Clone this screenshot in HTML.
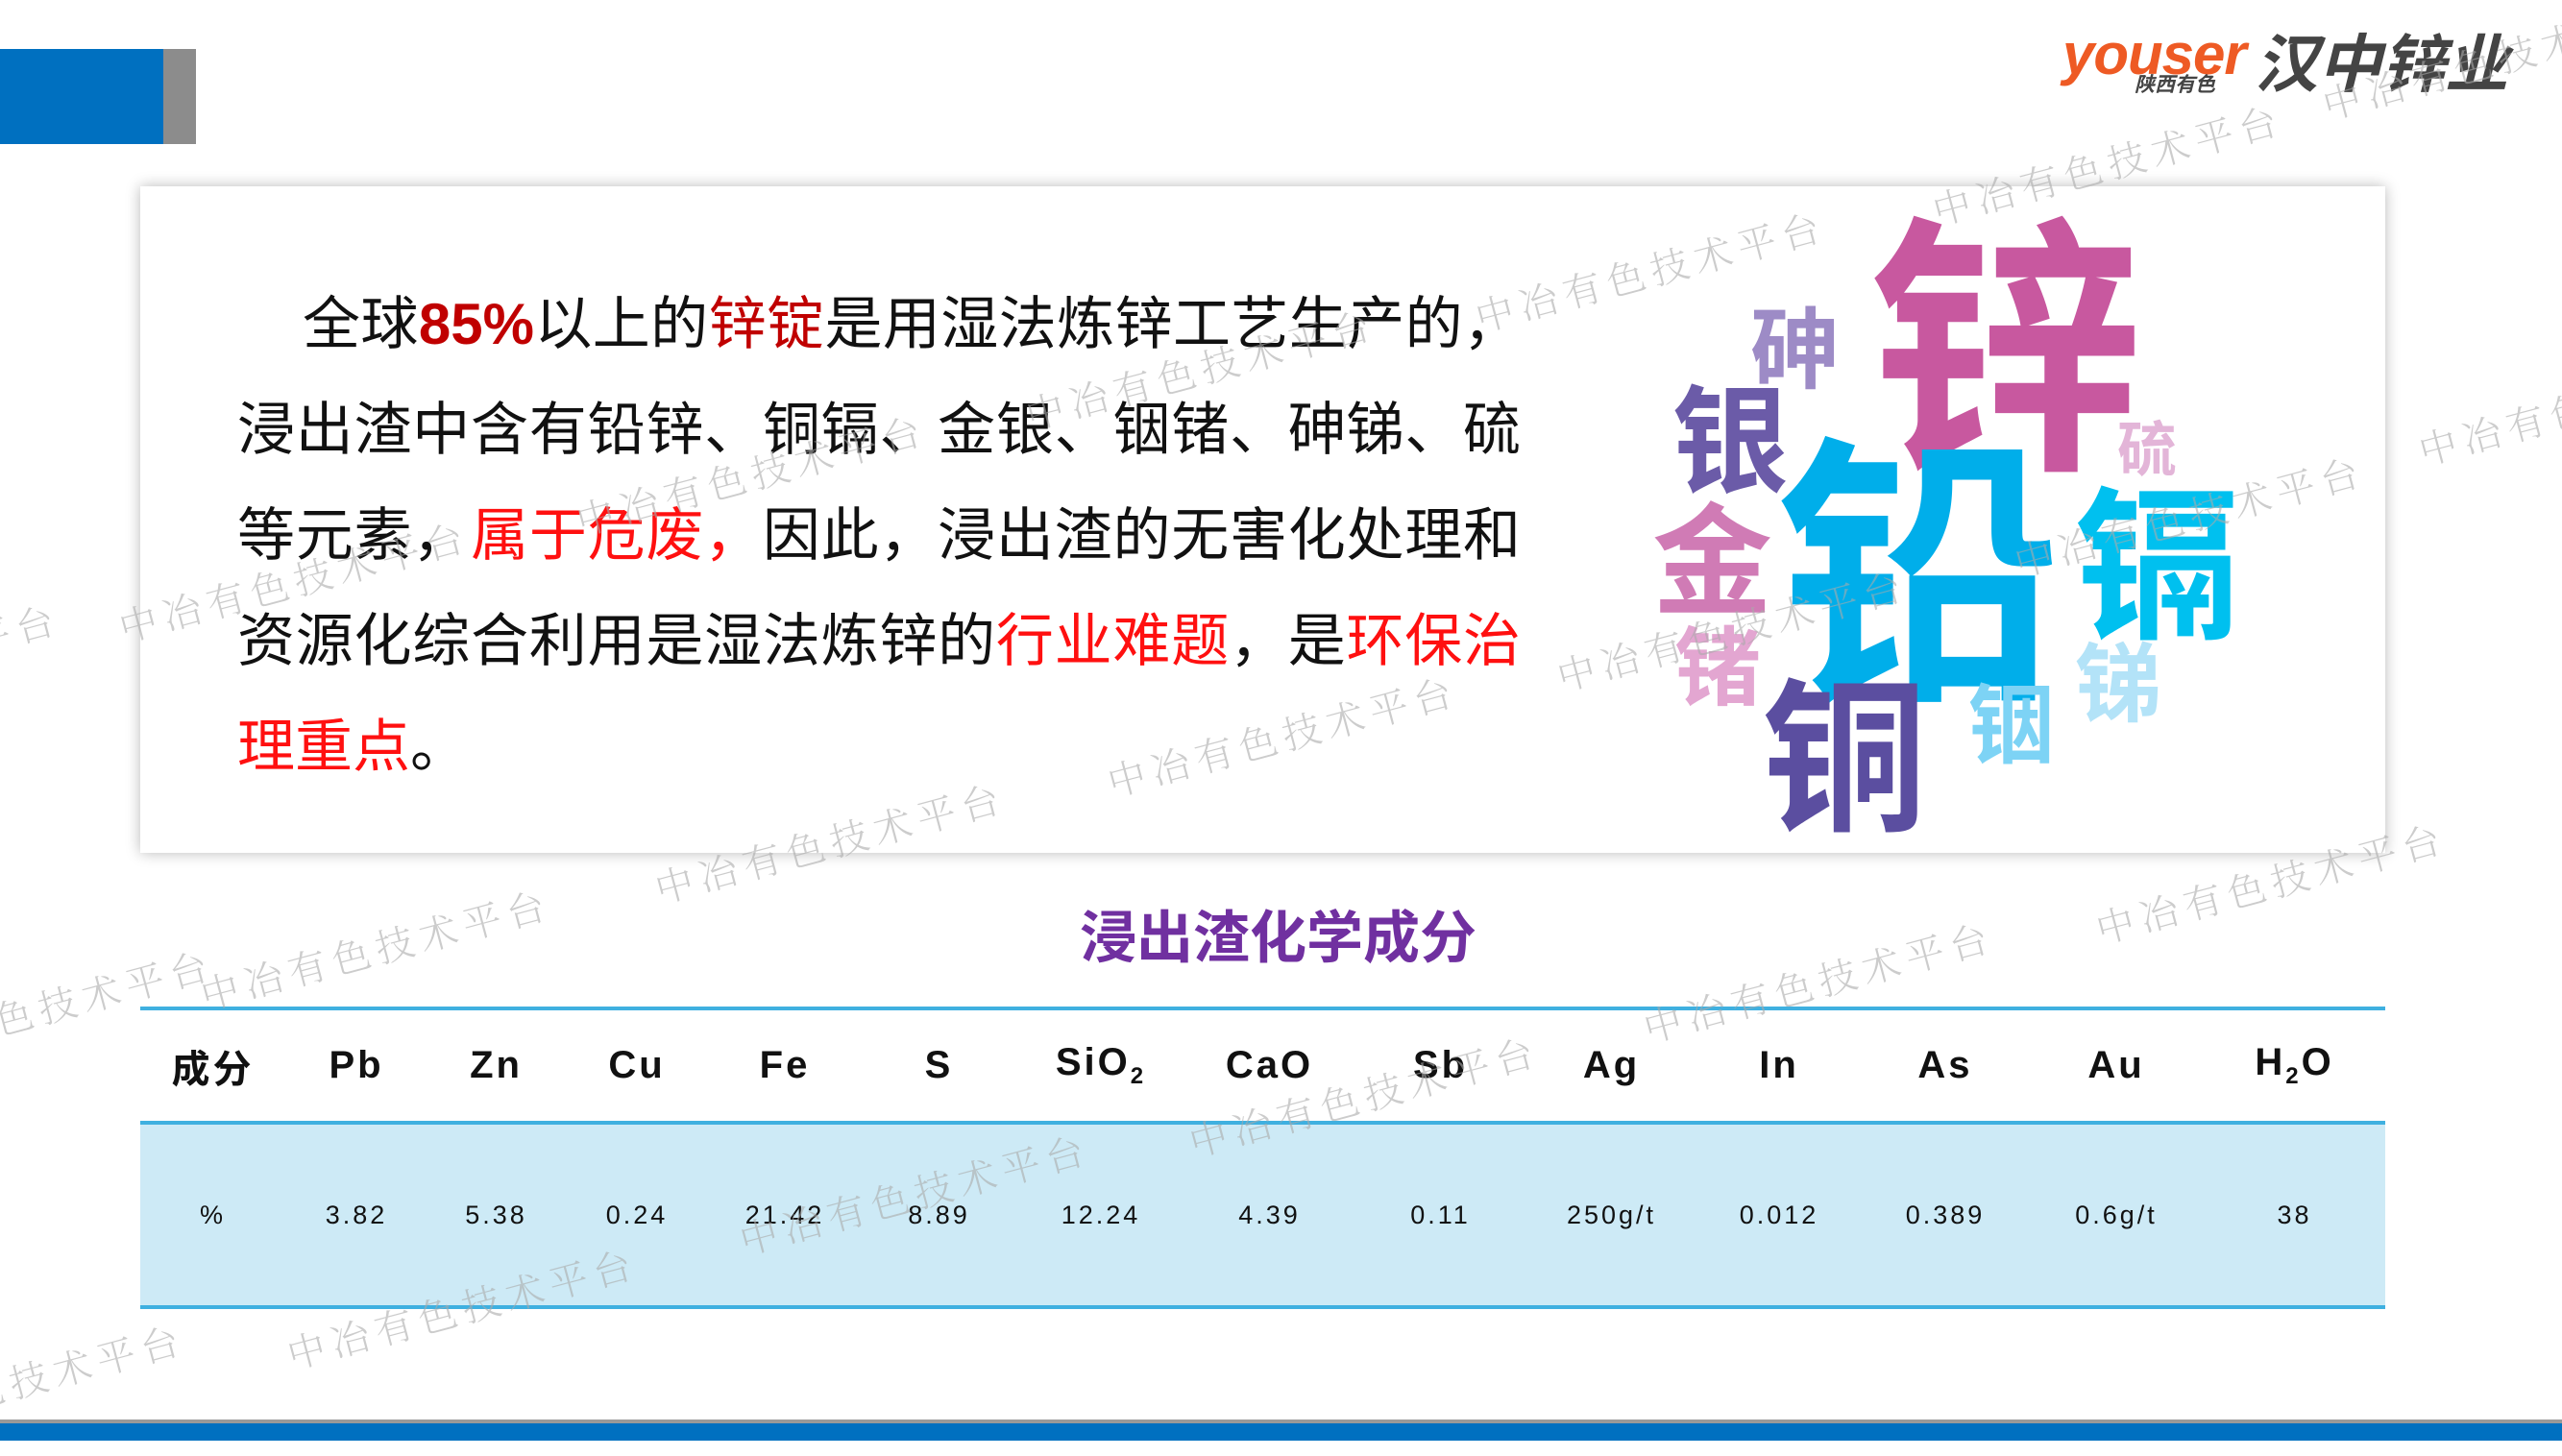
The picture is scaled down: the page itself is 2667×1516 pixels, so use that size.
<!DOCTYPE html>
<html><head><meta charset="utf-8"><style>
*{margin:0;padding:0;box-sizing:border-box}
body{width:2667px;height:1500px;position:relative;background:#fff;overflow:hidden;font-family:"Liberation Sans","Noto Sans CJK SC",sans-serif}
.abs{position:absolute}
.card{left:146px;top:194px;width:2337px;height:694px;background:#fff;box-shadow:0 0 14px rgba(0,0,0,.28)}
.txt{left:247px;top:283px;width:1336px;font-size:60px;line-height:110px;color:#111;text-align:justify;text-align-last:justify}
.txt p{white-space:nowrap}
.r{color:#ff1010}.dr{color:#c00000;font-weight:bold}
.w{position:absolute;font-family:"Noto Sans CJK SC",sans-serif;font-weight:bold;line-height:1;white-space:nowrap}
.wm{position:absolute;font-family:"Noto Serif CJK SC",serif;font-weight:300;font-size:40px;letter-spacing:7px;color:rgba(170,170,170,.6);transform:translate(-50%,-50%) rotate(-15deg);white-space:nowrap}
table{position:absolute;left:146px;top:1048px;width:2337px;border-collapse:collapse;table-layout:fixed}
td{text-align:center;padding:0}
.h td{height:119px;font-size:40px;font-weight:bold;color:#111;letter-spacing:3px}
.d td{height:192px;font-size:27px;color:#111;letter-spacing:3px;background:#cdeaf6}
</style></head><body>
<div class="abs" style="left:0;top:51px;width:170px;height:99px;background:#0070c0"></div>
<div class="abs" style="left:170px;top:51px;width:34px;height:99px;background:#8c8c8c"></div>
<div class="abs" style="left:2147px;top:22px;font-size:60px;font-style:italic;font-weight:bold;color:#ee5a24;letter-spacing:-1px">youser</div>
<div class="abs" style="left:2222px;top:72px;font-size:21px;font-weight:bold;font-style:italic;color:#444">陕西有色</div>
<div class="abs" style="left:2347px;top:26px;font-size:66px;font-weight:bold;font-style:italic;color:#444;font-family:'Noto Sans CJK SC',sans-serif;line-height:1.1">汉中锌业</div>
<div class="abs card"></div>
<div class="abs txt">
<p style="padding-left:68px">全球<span class="dr">85%</span>以上的<span style="color:#c00000">锌锭</span>是用湿法炼锌工艺生产的，</p>
<p>浸出渣中含有铅锌、铜镉、金银、铟锗、砷锑、硫</p>
<p>等元素，<span class="r">属于危废，</span>因此，浸出渣的无害化处理和</p>
<p>资源化综合利用是湿法炼锌的<span class="r">行业难题</span>，是<span class="r">环保治</span></p>
<p style="text-align-last:left"><span class="r">理重点</span>。</p>
</div>
<div class="w" style="left:1945px;top:200px;font-size:285px;color:#c8589f">锌</div>
<div class="w" style="left:1850px;top:428px;font-size:295px;color:#00aeea">铅</div>
<div class="w" style="left:2160px;top:490px;font-size:172px;color:#00c0ef">镉</div>
<div class="w" style="left:1834px;top:690px;font-size:172px;color:#5b4ea0">铜</div>
<div class="w" style="left:1740px;top:390px;font-size:122px;color:#6b5ba8">银</div>
<div class="w" style="left:1720px;top:512px;font-size:125px;color:#d07bb5">金</div>
<div class="w" style="left:1743px;top:643px;font-size:90px;color:#e3a6d1">锗</div>
<div class="w" style="left:1822px;top:312px;font-size:92px;color:#9d8bc6">砷</div>
<div class="w" style="left:2204px;top:432px;font-size:62px;color:#e3b5d8">硫</div>
<div class="w" style="left:2160px;top:660px;font-size:90px;color:#b3e3f8">锑</div>
<div class="w" style="left:2049px;top:703px;font-size:90px;color:#7dd3f5">铟</div>
<div class="abs" style="left:0;top:929px;width:2667px;text-align:center;font-size:59px;font-weight:bold;color:#7030a0;font-family:'Noto Sans CJK SC',sans-serif"><span style="position:relative;left:-3px">浸出渣化学成分</span></div>
<table>
<colgroup><col style="width:151px"><col style="width:148px"><col style="width:143px"><col style="width:150px"><col style="width:158px"><col style="width:163px"><col style="width:174px"><col style="width:177px"><col style="width:179px"><col style="width:177px"><col style="width:172px"><col style="width:174px"><col style="width:182px"><col style="width:189px"></colgroup>
<tr class="h" style="border-top:4px solid #3fb0e0;border-bottom:4px solid #3fb0e0"><td>成分</td><td>Pb</td><td>Zn</td><td>Cu</td><td>Fe</td><td>S</td><td>SiO<sub style="font-size:24px">2</sub></td><td>CaO</td><td>Sb</td><td>Ag</td><td>In</td><td>As</td><td>Au</td><td>H<sub style="font-size:24px">2</sub>O</td></tr>
<tr class="d" style="border-bottom:4px solid #3fb0e0"><td>%</td><td>3.82</td><td>5.38</td><td>0.24</td><td>21.42</td><td>8.89</td><td>12.24</td><td>4.39</td><td>0.11</td><td>250g/t</td><td>0.012</td><td>0.389</td><td>0.6g/t</td><td>38</td></tr>
</table>
<div class="abs" style="left:0;top:1478px;width:2667px;height:4px;background:#999"></div>
<div class="abs" style="left:0;top:1482px;width:2667px;height:18px;background:#0070c0"></div>
<div class="wm" style="left:2194px;top:170px">中冶有色技术平台</div>
<div class="wm" style="left:1718px;top:281px">中冶有色技术平台</div>
<div class="wm" style="left:1250px;top:383px">中冶有色技术平台</div>
<div class="wm" style="left:782px;top:493px">中冶有色技术平台</div>
<div class="wm" style="left:306px;top:604px">中冶有色技术平台</div>
<div class="wm" style="left:2279px;top:536px">中冶有色技术平台</div>
<div class="wm" style="left:1803px;top:655px">中冶有色技术平台</div>
<div class="wm" style="left:1335px;top:765px">中冶有色技术平台</div>
<div class="wm" style="left:864px;top:876px">中冶有色技术平台</div>
<div class="wm" style="left:391px;top:987px">中冶有色技术平台</div>
<div class="wm" style="left:2364px;top:918px">中冶有色技术平台</div>
<div class="wm" style="left:1893px;top:1021px">中冶有色技术平台</div>
<div class="wm" style="left:1420px;top:1140px">中冶有色技术平台</div>
<div class="wm" style="left:952px;top:1242px">中冶有色技术平台</div>
<div class="wm" style="left:481px;top:1361px">中冶有色技术平台</div>
<div class="wm" style="left:40px;top:1050px">中冶有色技术平台</div>
<div class="wm" style="left:10px;top:1440px">中冶有色技术平台</div>
<div class="wm" style="left:2700px;top:420px">中冶有色技术平台</div>
<div class="wm" style="left:2600px;top:60px">中冶有色技术平台</div>
<div class="wm" style="left:-120px;top:690px">中冶有色技术平台</div>
</body></html>
